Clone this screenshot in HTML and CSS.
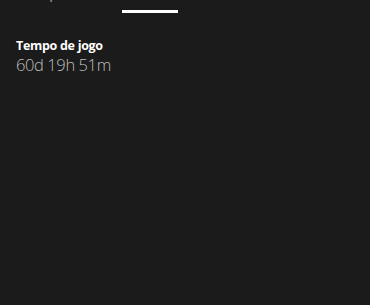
FILE: index.html
```html
<!DOCTYPE html>
<html lang="pt">
<head>
    <meta charset="UTF-8">
    <meta name="viewport" content="width=device-width, initial-scale=1.0">
    <title>Estatísticas</title>
    <link rel="stylesheet" href="styles.css">
</head>
<body>
    <div class="tabs">
        <div class="tab">Conquistas</div>
        <div class="tab active">Estatísticas</div>
    </div>
    <div class="stats">
        <div class="stat">
            <div class="stat-label">Tempo de jogo</div>
            <div class="stat-value">60d 19h 51m</div>
        </div>
    </div>
</body>
</html>
```

FILE: styles.css
```css
body {
    font-family: "Open Sans", "Noto Sans", sans-serif;
    margin: 0;
    height: 100vh;
    background-color: #1b1b1b;
    color: #fff;
    overflow: hidden;
}

.tabs {
    display: flex;
    align-items: flex-start;
    gap: 34px;
    padding-left: 25px;
    margin-top: -12px;
}

.tab {
    font-size: 11px;
    line-height: 14px;
    color: #9a9a9a;
    font-weight: 600;
}

.tab.active {
    color: #fff;
}

.tab.active::after {
    content: "";
    display: block;
    height: 3px;
    margin: 8px 0 0 4px;
    background-color: #fff;
}

.stats {
    padding: 25px 16px 0;
}

.stat-label {
    font-size: 12.5px;
    font-weight: 700;
    line-height: 16px;
    letter-spacing: -0.3px;
}

.stat-value {
    font-size: 16.5px;
    font-weight: 300;
    line-height: 22px;
    color: #bdbdbd;
    letter-spacing: -0.4px;
}
```
